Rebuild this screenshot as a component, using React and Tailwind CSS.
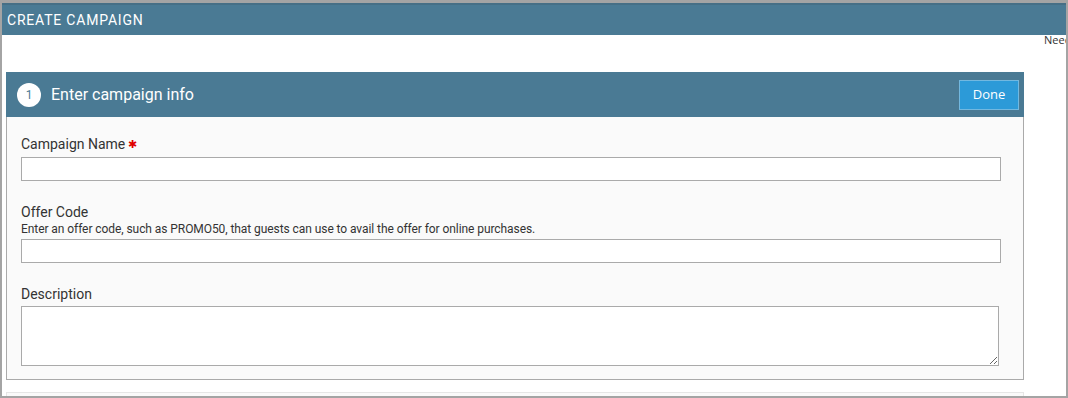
import React from 'react';

const Field = ({ label, required, help, children }) => (
  <div className="flex flex-col">
    <label className="text-[14px] leading-[20px] text-[#333]">
      {label}
      {required && <span className="ml-[3px] text-[11px] text-[#e00000] align-[1px]">✱</span>}
    </label>
    {help && <p className="text-[12px] leading-[16px] tracking-[-0.07px] text-[#333] -mt-[1px] mb-[0px]">{help}</p>}
    <div className="mt-[2px]">{children}</div>
  </div>
);

const App = () => {
  return (
    <div className="w-[1068px] h-[398px] bg-[#a4a4a4] pl-[2px] pr-[2px] pt-[3px] pb-[2px] font-['Roboto',sans-serif] overflow-hidden">
      <div className="relative h-full bg-white overflow-hidden">
        {/* Top bar */}
        <div className="relative z-10 h-[32px] bg-[#4a7a94] border-t-[2px] border-[#466f86] flex items-center px-[5px]">
          <h1 className="text-white text-[14px] tracking-[0.8px] leading-none">CREATE CAMPAIGN</h1>
        </div>
        <span className="absolute left-[1042px] top-[29px] whitespace-nowrap text-[11px] text-[#333] font-['Open_Sans',sans-serif]">Need help?</span>

        <div className="pl-[4px] pt-[37px] w-[1022px]">
          {/* Step panel */}
          <div>
            <div className="h-[45px] bg-[#4a7a94] flex items-center pl-[11px] pr-[5px]">
              <div className="w-[24px] h-[24px] rounded-full bg-white flex items-center justify-center text-[#4a7a94] text-[12px]">1</div>
              <h2 className="ml-[10px] text-white text-[16px]">Enter campaign info</h2>
              <button className="ml-auto w-[60px] h-[30px] bg-[#2c9ad8] border border-[#72b8e0] text-white text-[13px] font-['Open_Sans',sans-serif]">Done</button>
            </div>
            <div className="bg-[#fafafa] border border-t-0 border-[#aaaaaa] pl-[14px] pr-[22px] pt-[17px] pb-[13px] flex flex-col gap-[21px]">
              <Field label="Campaign Name" required>
                <input className="block w-full h-[24px] bg-white border border-[#aaaaaa] outline-none" />
              </Field>
              <Field label="Offer Code" help="Enter an offer code, such as PROMO50, that guests can use to avail the offer for online purchases.">
                <input className="block w-full h-[24px] bg-white border border-[#aaaaaa] outline-none" />
              </Field>
              <Field label="Description">
                <textarea className="block w-[978px] h-[60px] bg-white border border-[#aaaaaa] outline-none" />
              </Field>
            </div>
          </div>
          {/* Next panel peeking */}
          <div className="mt-[12px] h-[20px] border-t border-x border-[#e6e6e6] bg-[#fafafa]"></div>
        </div>
      </div>
    </div>
  );
};

export default App;
